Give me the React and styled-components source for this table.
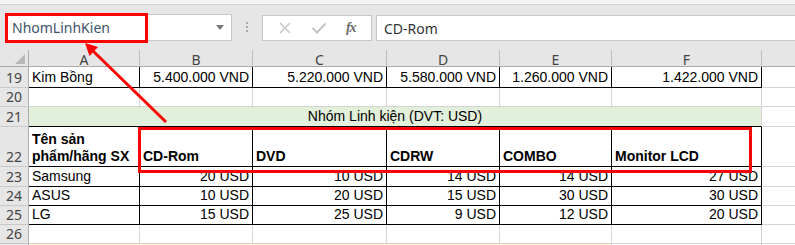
import React from 'react'
import styled, { createGlobalStyle } from 'styled-components'

const GlobalStyle = createGlobalStyle`
  html, body {
    margin: 0;
    padding: 0;
    background: #ffffff;
    overflow: hidden;
  }
  body {
    font-family: "Liberation Sans", Arial, sans-serif;
  }
`

const cols = [29, 111, 113, 134, 113, 112, 150, 40]
const rows = [17, 21, 19, 20, 40, 20, 19, 19, 19, 20]

// layout
const Page = styled.div`
  position: relative;
  width: 795px;
  height: 245px;
  overflow: hidden;
  display: flex;
  flex-direction: column;

  & > * {
    flex-shrink: 0;
  }
`

const TopStrip = styled.div`
  height: 4px;
  background: #f3f3f3;
  border-bottom: 1px solid #d2d2d2;
`

const Toolbar = styled.div`
  height: 45px;
  box-sizing: border-box;
  background: #e6e6e6;
  display: flex;
  align-items: flex-start;
  padding: 9px 0 0 5px;
`

const NameBox = styled.div`
  width: 227px;
  height: 27px;
  box-sizing: border-box;
  background: #ffffff;
  border: 1px solid #c6c6c6;
  display: flex;
  align-items: center;
  justify-content: space-between;
  padding: 0 7px 0 6px;
  font-family: "Noto Sans", "Open Sans", sans-serif;
  font-size: 14px;
  color: #3d536c;
`

const Caret = styled.span`
  width: 0;
  height: 0;
  border-left: 4px solid transparent;
  border-right: 4px solid transparent;
  border-top: 5px solid #7a7a7a;
`

const Grip = styled.div`
  width: 30px;
  height: 26px;
  display: flex;
  flex-direction: column;
  align-items: center;
  justify-content: center;
  gap: 2px;

  span {
    width: 2px;
    height: 2px;
    background: #a8a8a8;
  }
`

const FxButtons = styled.div`
  width: 110px;
  height: 26px;
  margin-top: 1px;
  box-sizing: border-box;
  background: #ffffff;
  border: 1px solid #c6c6c6;
  display: flex;
  align-items: center;
  justify-content: space-around;
  padding: 0 6px;
`

const Fx = styled.span`
  font-family: "Liberation Serif", "Times New Roman", serif;
  font-style: italic;
  font-weight: bold;
  font-size: 14px;
  color: #6a6a6a;
  letter-spacing: -1px;
`

const FormulaBar = styled.div`
  flex: 1;
  height: 26px;
  margin: 1px 0 0 4px;
  box-sizing: border-box;
  background: #ffffff;
  border: 1px solid #c6c6c6;
  border-right: none;
  display: flex;
  align-items: center;
  padding-left: 7px;
  font-family: "Noto Sans", "Open Sans", sans-serif;
  font-size: 14px;
  color: #333333;
`

// sheet
const Sheet = styled.div`
  display: grid;
  grid-template-columns: ${cols.map(c => c + 'px').join(' ')};
  grid-template-rows: ${rows.map(r => r + 'px').join(' ')};
`

const Corner = styled.div`
  background: #e6e6e6;
  border-right: 1px solid #ababab;
  border-bottom: 1px solid #ababab;
  box-sizing: border-box;
  position: relative;

  &::after {
    content: '';
    position: absolute;
    right: 3px;
    bottom: 2px;
    width: 0;
    height: 0;
    border-left: 10px solid transparent;
    border-bottom: 10px solid #b8b8b8;
  }
`

const ColHead = styled.div`
  background: #e6e6e6;
  border-right: 1px solid #bdbdbd;
  border-bottom: 1px solid #ababab;
  box-sizing: border-box;
  display: flex;
  align-items: center;
  justify-content: center;
  font-family: "Noto Sans", "Open Sans", sans-serif;
  font-size: 14px;
  color: #444444;
  padding-top: 2px;
`

const RowNum = styled.div`
  background: #e6e6e6;
  border-right: 1px solid #ababab;
  border-bottom: 1px solid #c9c9c9;
  box-sizing: border-box;
  display: flex;
  align-items: flex-end;
  justify-content: center;
  padding-bottom: 1px;
  font-family: "Noto Sans", "Open Sans", sans-serif;
  font-size: 14px;
  line-height: 17px;
  color: #444444;
`

const Cell = styled.div`
  box-sizing: border-box;
  border-right: 1px solid ${p => (p.$boxed ? '#000000' : '#d4d4d4')};
  border-bottom: 1px solid ${p => (p.$boxed || p.$under ? '#000000' : '#d4d4d4')};
  background: ${p => p.$fill || '#ffffff'};
  grid-column: ${p => p.$span ? `span ${p.$span}` : 'auto'};
  display: flex;
  align-items: flex-end;
  justify-content: ${p => p.$align === 'right' ? 'flex-end' : p.$align === 'center' ? 'center' : 'flex-start'};
  text-align: ${p => p.$align || 'left'};
  padding: 0 3px 1px 3px;
  font-size: 14px;
  line-height: 17px;
  font-weight: ${p => (p.$bold ? 'bold' : 'normal')};
  color: #000000;
  white-space: ${p => (p.$wrap ? 'normal' : 'nowrap')};
  overflow: visible;
`

const Overlay = styled.svg`
  position: absolute;
  left: 0;
  top: 0;
  pointer-events: none;
`

const data = [
  ['Samsung', '20 USD', '10 USD', '14 USD', '14 USD', '27 USD'],
  ['ASUS', '10 USD', '20 USD', '15 USD', '30 USD', '30 USD'],
  ['LG', '15 USD', '25 USD', '9 USD', '12 USD', '20 USD'],
]

function Blank() {
  return <Cell />
}

export default function App() {
  return (
    <Page>
      <GlobalStyle />
      <TopStrip />
      <Toolbar>
        <NameBox>
          <span>NhomLinhKien</span>
          <Caret />
        </NameBox>
        <Grip><span /><span /><span /></Grip>
        <FxButtons>
          <svg width="14" height="14" viewBox="0 0 14 14">
            <path d="M2 2 L12 12 M12 2 L2 12" stroke="#c4c4c4" strokeWidth="1.4" fill="none" />
          </svg>
          <svg width="16" height="14" viewBox="0 0 16 14">
            <path d="M1.5 7 L6 11.5 L14.5 2.5" stroke="#c4c4c4" strokeWidth="2" fill="none" />
          </svg>
          <Fx>fx</Fx>
        </FxButtons>
        <FormulaBar>CD-Rom</FormulaBar>
      </Toolbar>

      <Sheet>
        <Corner />
        {['A', 'B', 'C', 'D', 'E', 'F', ''].map((c, i) => (
          <ColHead key={i}>{c}</ColHead>
        ))}

        <RowNum>19</RowNum>
        <Cell $boxed>Kim Bồng</Cell>
        {['5.400.000 VND', '5.220.000 VND', '5.580.000 VND', '1.260.000 VND', '1.422.000 VND'].map((v, i) => (
          <Cell key={i} $boxed $align="right">{v}</Cell>
        ))}
        <Blank />

        <RowNum>20</RowNum>
        {[0, 1, 2, 3, 4, 5, 6].map(i => <Blank key={i} />)}

        <RowNum>21</RowNum>
        <Cell $span={6} $fill="#e2efda" $align="center" $under>Nhóm Linh kiện (DVT: USD)</Cell>
        <Blank />

        <RowNum>22</RowNum>
        <Cell $boxed $bold $wrap>Tên sản phẩm/hãng SX</Cell>
        {['CD-Rom', 'DVD', 'CDRW', 'COMBO', 'Monitor LCD'].map(h => (
          <Cell key={h} $boxed $bold>{h}</Cell>
        ))}
        <Blank />

        {data.map((row, r) => (
          <React.Fragment key={r}>
            <RowNum>{23 + r}</RowNum>
            {row.map((v, i) => (
              <Cell key={i} $boxed $align={i === 0 ? 'left' : 'right'}>{v}</Cell>
            ))}
            <Blank />
          </React.Fragment>
        ))}

        <RowNum>26</RowNum>
        {[0, 1, 2, 3, 4, 5, 6].map(i => <Blank key={i} />)}

        {/* row 27, only its top edge is in view */}
        <RowNum />
        <Cell $span={5} $fill="#fff2cc" />
        <Blank />
        <Blank />
      </Sheet>

      <Overlay width="795" height="245" viewBox="0 0 795 245">
        <rect x="6.5" y="14.5" width="140" height="27" fill="none" stroke="#ff0000" strokeWidth="3" />
        <rect x="139.5" y="128.5" width="611" height="43" fill="none" stroke="#ff0000" strokeWidth="3" />
        <line x1="166" y1="122" x2="92" y2="50" stroke="#ff0000" strokeWidth="3" />
        <polygon points="85,43 98,47 89.5,56" fill="#ff0000" />
      </Overlay>
    </Page>
  )
}
